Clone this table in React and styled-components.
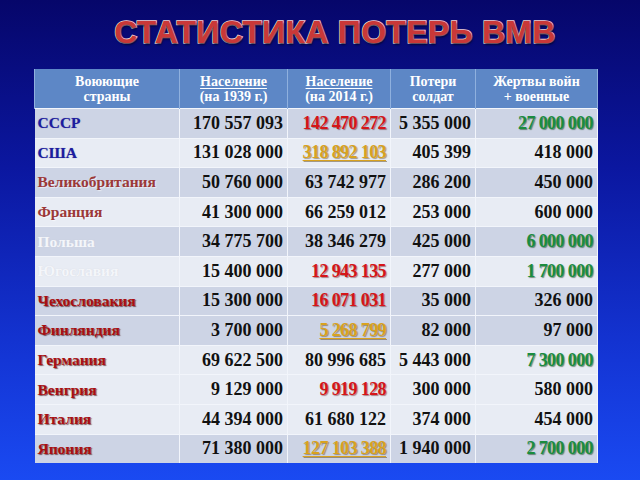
import React from 'react';
import styled, { createGlobalStyle } from 'styled-components';

const GlobalStyle = createGlobalStyle`
  html, body {
    margin: 0;
    padding: 0;
  }
  body {
    width: 640px;
    height: 480px;
    overflow: hidden;
    font-family: "Liberation Serif", "Times New Roman", serif;
  }
`;

const Slide = styled.div`
  width: 640px;
  height: 480px;
  box-sizing: border-box;
  padding-top: 11px;
  background: linear-gradient(180deg, #06066a 0%, #0b17a0 35%, #1436d6 75%, #1a4af2 100%);
  display: flex;
  flex-direction: column;
  align-items: center;
`;

const Title = styled.h1`
  margin: 0 0 0 30px;
  height: 58px;
  font-family: "Liberation Sans", Arial, sans-serif;
  font-weight: 700;
  font-size: 32px;
  line-height: 42px;
  letter-spacing: 0.3px;
  color: #c93838;
  -webkit-text-stroke: 1.6px #f3d2d2;
  paint-order: stroke fill;
  text-shadow: 1px 2px 2px rgba(0, 0, 20, 0.6);
`;

const Table = styled.table`
  width: 563px;
  margin-left: 34px;
  align-self: flex-start;
  border-collapse: collapse;
  table-layout: fixed;
`;

const HeadCell = styled.th`
  height: 39px;
  padding: 0 4px;
  background: #5d87c6;
  color: #ffffff;
  font-size: 14px;
  font-weight: 700;
  line-height: 15px;
  text-align: center;
  vertical-align: middle;
  border-left: 1px solid #8fb0de;
  border-right: 1px solid #8fb0de;
`;

const Under = styled.span`
  text-decoration: underline;
  text-underline-offset: 2px;
`;

const Row = styled.tr`
  background: ${({ $dark }) => ($dark ? '#cdd4e5' : '#e8ecf4')};
  border-top: 1px solid #f2f5fb;
`;

const nameColors = {
  blue: { color: '#1c1ca0', shadow: '0 0 1px rgba(40,40,120,0.5)' },
  brown: { color: '#9c3838', shadow: '1px 1px 1px rgba(255,255,255,0.6)' },
  white: { color: '#f4f6fa', shadow: '0 0 1px rgba(200,200,210,0.6)' },
  red: { color: '#a80f12', shadow: '1px 1px 1px rgba(60,0,0,0.6)' },
};

const NameCell = styled.td`
  height: 28.6px;
  padding: 0 3px;
  font-size: 15.5px;
  font-weight: 700;
  white-space: nowrap;
  color: ${({ $tone }) => nameColors[$tone].color};
  text-shadow: ${({ $tone }) => nameColors[$tone].shadow};
  border-right: 1px solid #f2f5fb;
  vertical-align: middle;
`;

const valueColors = {
  black: { color: '#111111', shadow: 'none', line: 'none' },
  red: { color: '#d51518', shadow: '1px 1px 1px rgba(90,0,0,0.45)', line: 'none' },
  gold: { color: '#d9a21e', shadow: '1px 1px 1px rgba(80,50,0,0.45)', line: 'underline' },
  green: { color: '#1a8c3e', shadow: '1px 1px 1px rgba(0,50,10,0.5)', line: 'none' },
};

const NumCell = styled.td`
  padding: 0 4px 0 0;
  font-size: 18px;
  font-weight: 700;
  text-align: right;
  white-space: nowrap;
  letter-spacing: ${({ $tone }) => ($tone === 'black' ? '0' : '-0.6px')};
  color: ${({ $tone }) => valueColors[$tone].color};
  text-shadow: ${({ $tone }) => valueColors[$tone].shadow};
  text-decoration: ${({ $tone }) => valueColors[$tone].line};
  text-underline-offset: 2px;
  border-right: 1px solid #f2f5fb;
  vertical-align: middle;
`;

const rows = [
  { name: 'СССР', tone: 'blue', dark: true, v: ['170 557 093', ['142 470 272', 'red'], '5 355 000', ['27 000 000', 'green']] },
  { name: 'США', tone: 'blue', dark: false, v: ['131 028 000', ['318 892 103', 'gold'], '405 399', '418 000'] },
  { name: 'Великобритания', tone: 'brown', dark: true, v: ['50 760 000', '63 742 977', '286 200', '450 000'] },
  { name: 'Франция', tone: 'brown', dark: false, v: ['41 300 000', '66 259 012', '253 000', '600 000'] },
  { name: 'Польша', tone: 'white', dark: true, v: ['34 775 700', '38 346 279', '425 000', ['6 000 000', 'green']] },
  { name: 'Югославия', tone: 'white', dark: false, v: ['15 400 000', ['12 943 135', 'red'], '277 000', ['1 700 000', 'green']] },
  { name: 'Чехословакия', tone: 'red', dark: true, v: ['15 300 000', ['16 071 031', 'red'], '35 000', '326 000'] },
  { name: 'Финляндия', tone: 'red', dark: true, v: ['3 700 000', ['5 268 799', 'gold'], '82 000', '97 000'] },
  { name: 'Германия', tone: 'red', dark: false, v: ['69 622 500', '80 996 685', '5 443 000', ['7 300 000', 'green']] },
  { name: 'Венгрия', tone: 'red', dark: false, v: ['9 129 000', ['9 919 128', 'red'], '300 000', '580 000'] },
  { name: 'Италия', tone: 'red', dark: false, v: ['44 394 000', '61 680 122', '374 000', '454 000'] },
  { name: 'Япония', tone: 'red', dark: true, v: ['71 380 000', ['127 103 388', 'gold'], '1 940 000', ['2 700 000', 'green']] },
];

const App = () => {
  return (
    <>
      <GlobalStyle />
      <Slide>
        <Title>СТАТИСТИКА ПОТЕРЬ ВМВ</Title>
        <Table>
          <colgroup>
            <col style={{ width: 145 }} />
            <col style={{ width: 108 }} />
            <col style={{ width: 103 }} />
            <col style={{ width: 85 }} />
            <col style={{ width: 122 }} />
          </colgroup>
          <thead>
            <tr>
              <HeadCell>Воюющие<br />страны</HeadCell>
              <HeadCell><Under>Население</Under><br />(на 1939 г.)</HeadCell>
              <HeadCell><Under>Население</Under><br />(на 2014 г.)</HeadCell>
              <HeadCell>Потери<br />солдат</HeadCell>
              <HeadCell>Жертвы войн<br />+ военные</HeadCell>
            </tr>
          </thead>
          <tbody>
            {rows.map((r) => (
              <Row key={r.name} $dark={r.dark}>
                <NameCell $tone={r.tone}>{r.name}</NameCell>
                {r.v.map((val, i) => {
                  const [text, tone] = Array.isArray(val) ? val : [val, 'black'];
                  return (
                    <NumCell key={i} $tone={tone}>{text}</NumCell>
                  );
                })}
              </Row>
            ))}
          </tbody>
        </Table>
      </Slide>
    </>
  );
};

export default App;
